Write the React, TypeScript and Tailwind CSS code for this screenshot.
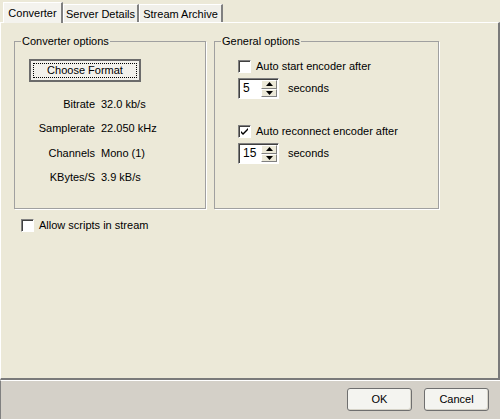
import React from 'react';

const font = "font-['Liberation_Sans',Arial,sans-serif] text-[11px] leading-[13px] text-black";

function CheckBox({ checked = false }: { checked?: boolean }) {
  return (
    <span className="flex h-[13px] w-[13px] shrink-0 items-center justify-center border border-b-white border-l-[#808080] border-r-white border-t-[#808080] bg-white shadow-[inset_1px_1px_0_#404040]">
      {checked && (
        <svg width="9" height="9" viewBox="0 0 9 9">
          <path d="M1 4 L3 6 L8 1 L8 3 L3 8 L1 6 Z" fill="#000" />
        </svg>
      )}
    </span>
  );
}

function Spinner({ value }: { value: string }) {
  return (
    <div className="flex h-[21px] w-[41px] border border-b-white border-l-[#808080] border-r-white border-t-[#808080] bg-white shadow-[inset_1px_1px_0_#404040]">
      <span className="flex-1 pl-[4px] pt-[3px] text-[12px]">{value}</span>
      <div className="my-[1px] mr-[1px] flex w-[16px] flex-col">
        <div className="flex flex-1 items-center justify-center border border-b-[#808080] border-l-white border-r-[#808080] border-t-white bg-[#ECE9D8]">
          <svg width="7" height="4" viewBox="0 0 7 4"><path d="M3.5 0 L7 4 L0 4 Z" fill="#000" /></svg>
        </div>
        <div className="flex flex-1 items-center justify-center border border-b-[#808080] border-l-white border-r-[#808080] border-t-white bg-[#ECE9D8]">
          <svg width="7" height="4" viewBox="0 0 7 4"><path d="M0 0 L7 0 L3.5 4 Z" fill="#000" /></svg>
        </div>
      </div>
    </div>
  );
}

function Tab({ label, active = false, w }: { label: string; active?: boolean; w: string }) {
  return (
    <div
      className={
        active
          ? `relative z-10 -mb-px flex h-[21px] ${w} shrink-0 items-start justify-center whitespace-nowrap border-l border-r-2 border-t border-l-white border-r-[#808080] border-t-white bg-[#F4F3EE] pt-[4px]`
          : `flex h-[18px] ${w} shrink-0 items-start justify-center whitespace-nowrap border-l border-r-2 border-t border-l-white border-r-[#808080] border-t-white bg-[#F1F0EA] pt-[3px]`
      }
    >
      <span>{label}</span>
    </div>
  );
}

const rows = [
  ['Bitrate', '32.0 kb/s'],
  ['Samplerate', '22.050 kHz'],
  ['Channels', 'Mono (1)'],
  ['KBytes/S', '3.9 kB/s'],
];

export default function App() {
  return (
    <div className={`flex h-[419px] w-[500px] flex-col overflow-hidden bg-[#ECE9D8] ${font}`}>
      <div className="flex h-[22px] shrink-0 items-end pl-[3px]">
        <Tab label="Converter" active w="w-[60px]" />
        <Tab label="Server Details" w="w-[76px]" />
        <Tab label="Stream Archive" w="w-[84px]" />
      </div>

      <div className="flex h-[358px] shrink-0 flex-col border-b-2 border-l border-r-2 border-t border-b-[#7a7a7a] border-l-white border-r-[#7a7a7a] border-t-white pl-[13px] pt-[12px]">
        <div className="flex gap-[8px]">
          <fieldset className="h-[174px] w-[192px] border border-[#A0A0A0] shadow-[1px_1px_0_#fff]">
            <legend className="ml-[6px] px-[1px] leading-[13px]">Converter options</legend>
            <div className="px-[14px]">
              <div className="mt-[11px] flex h-[23px] w-[112px] items-center justify-center border-2 border-[#6b6b6b] bg-[#F2F1EC] p-[2px]">
                <div className="flex h-full w-full items-center justify-center border border-dotted border-black">
                  Choose Format
                </div>
              </div>
              <div className="mt-[10px] grid grid-cols-[66px_auto] gap-x-[6px]">
                {rows.map(([k, v]) => (
                  <React.Fragment key={k}>
                    <div className="flex h-[24.5px] items-center justify-end whitespace-nowrap">{k}</div>
                    <div className="flex h-[24.5px] items-center whitespace-nowrap">{v}</div>
                  </React.Fragment>
                ))}
              </div>
            </div>
          </fieldset>

          <fieldset className="h-[174px] w-[225px] border border-[#A0A0A0] shadow-[1px_1px_0_#fff]">
            <legend className="ml-[6px] px-[1px] leading-[13px]">General options</legend>
            <div className="pl-[23px]">
              <div className="mt-[12px] flex items-center gap-[5px]">
                <CheckBox />
                <span>Auto start encoder after</span>
              </div>
              <div className="mt-[5px] flex items-center gap-[9px]">
                <Spinner value="5" />
                <span>seconds</span>
              </div>
              <div className="mt-[26px] flex items-center gap-[5px]">
                <CheckBox checked />
                <span>Auto reconnect encoder after</span>
              </div>
              <div className="mt-[5px] flex items-center gap-[9px]">
                <Spinner value="15" />
                <span>seconds</span>
              </div>
            </div>
          </fieldset>
        </div>

        <div className="ml-[7px] mt-[10px] flex items-center gap-[5px]">
          <CheckBox />
          <span>Allow scripts in stream</span>
        </div>
      </div>

      <div className="flex flex-1 items-start justify-end gap-[12px] border-l border-t border-l-[#808080] border-t-white bg-[#D4D0C8] pr-[11px] pt-[7px]">
        <button className="flex h-[23px] w-[65px] items-center justify-center rounded-[3px] border border-[#6f6f6f] bg-[#F4F4F0] shadow-[inset_-1px_-1px_0_#d6d3c8]">
          OK
        </button>
        <button className="flex h-[23px] w-[65px] items-center justify-center rounded-[3px] border border-[#6f6f6f] bg-[#F4F4F0] shadow-[inset_-1px_-1px_0_#d6d3c8]">
          Cancel
        </button>
      </div>
    </div>
  );
}
